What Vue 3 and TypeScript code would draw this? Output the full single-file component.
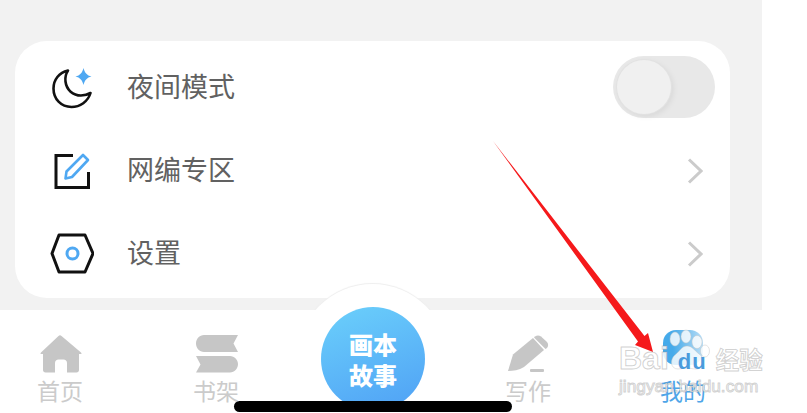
<script setup lang="ts">
interface MenuRow {
  id: string
  label: string
  chevron: boolean
}

interface TabItem {
  id: string
  label: string
  active?: boolean
}

const rows: MenuRow[] = [
  { id: 'night', label: '夜间模式', chevron: false },
  { id: 'editor', label: '网编专区', chevron: true },
  { id: 'settings', label: '设置', chevron: true },
]

const tabs: TabItem[] = [
  { id: 'home', label: '首页' },
  { id: 'shelf', label: '书架' },
  { id: 'story', label: '' },
  { id: 'write', label: '写作' },
  { id: 'mine', label: '我的', active: true },
]
</script>

<template>
  <div class="page">
    <div class="phone">
      <main class="content">
        <section class="card">
          <div v-for="row in rows" :key="row.id" class="row">
            <span class="row-icon">
              <svg v-if="row.id === 'night'" width="44" height="44" viewBox="0 0 44 44" fill="none">
                <path d="M18 4.500C9 6.500 3.500 14 3.500 22.500C3.500 33 11 41 21.500 41C30 41 38 35.500 40.500 27C37 29 34 29.500 31 29.500C23 29.500 16.500 24 15.500 15.500C15 11.500 16 7.500 18 4.500Z" stroke="#111" stroke-width="2.6" stroke-linejoin="round" />
                <path d="M33.500 2C34.500 6.500 37 9.500 41.500 10.500C37 11.500 34.500 14.500 33.500 19C32.500 14.500 30 11.500 25.500 10.500C30 9.500 32.500 6.500 33.500 2Z" fill="#4fa8f2" />
              </svg>
              <svg v-else-if="row.id === 'editor'" width="44" height="44" viewBox="0 0 44 44" fill="none">
                <path d="M23 6.500H6V38.500H38.500V23" stroke="#111" stroke-width="3" />
                <path d="M15.500 29.500L16.500 22.500L33 6L38 11L22 28Z" stroke="#4fa8f2" stroke-width="2.6" stroke-linejoin="round" />
              </svg>
              <svg v-else width="44" height="44" viewBox="0 0 44 44" fill="none">
                <path d="M9 3H35L43 21.500L35 40H9L2 21.500Z" stroke="#111" stroke-width="3" stroke-linejoin="round" />
                <circle cx="22.500" cy="21.500" r="5.500" stroke="#4fa8f2" stroke-width="3" />
              </svg>
            </span>
            <span class="row-label">{{ row.label }}</span>
            <span v-if="row.id === 'night'" class="switch"><span class="knob" /></span>
            <svg v-if="row.chevron" class="chevron" width="16" height="26" viewBox="0 0 16 26" fill="none">
              <path d="M2 1.500L14 13L2 24.500" stroke="#cbcbcb" stroke-width="3" />
            </svg>
          </div>
        </section>
      </main>

      <nav class="tabbar">
        <div class="bump" />
        <div v-for="tab in tabs" :key="tab.id" class="tab" :class="{ 'tab--active': tab.active }">
          <template v-if="tab.id === 'story'">
            <div class="story">
              <span>画本</span>
              <span>故事</span>
            </div>
          </template>
          <template v-else>
            <span class="tab-icon">
              <svg v-if="tab.id === 'home'" width="44" height="38" viewBox="0 0 44 38">
                <path d="M20.500 1C21.500 0 22.500 0 23.500 1L43 17.500C44 18.500 43.500 19 42.500 19H41V35C41 36.500 40 37.500 38.500 37.500H29V28C29 26 27.500 24.500 25.500 24.500H20.500C18.500 24.500 17 26 17 28V37.500H7.500C6 37.500 5 36.500 5 35V19H3.500C2.500 19 2 18.500 3 17.500Z" fill="#c6c6c6" />
              </svg>
              <svg v-else-if="tab.id === 'shelf'" width="44" height="38" viewBox="0 0 44 38">
                <path d="M10 0H44L39.500 8.500L44 17H10C5.500 17 2 13 2 8.500C2 4 5.500 0 10 0Z" fill="#c6c6c6" />
                <path d="M2 21H36C40.500 21 44 25 44 29C44 33.500 40.500 37.500 36 37.500H2L6.500 29.500Z" fill="#c6c6c6" />
              </svg>
              <svg v-else-if="tab.id === 'write'" width="44" height="38" viewBox="0 0 44 38">
                <path d="M2 36L7 19.500L27 3L38 15L18 32C13 35 7 36 2 36Z" fill="#c6c6c6" />
                <path d="M29 1.500C31 0 33 0 35 1.500L41 7C42.500 9 42.500 11 41 13L39.500 14L28 2.500Z" fill="#c6c6c6" />
                <rect x="24" y="34" width="14" height="3" rx="1" fill="#c6c6c6" />
              </svg>
              <svg v-else class="paw" width="52" height="50" viewBox="0 0 52 50">
                <defs>
                  <linearGradient id="pawFill" x1="0" y1="0" x2="1" y2="0">
                    <stop offset="0.25" stop-color="#45aaea" />
                    <stop offset="1" stop-color="#b9def6" />
                  </linearGradient>
                </defs>
                <rect x="4" y="4" width="40" height="35" rx="13" fill="url(#pawFill)" />
                <g fill="#fff" fill-opacity="0.82" stroke="#c4c4c4" stroke-opacity="0.45">
                  <ellipse cx="16" cy="13" rx="5" ry="7" />
                  <ellipse cx="27" cy="10.500" rx="5" ry="6.500" />
                  <ellipse cx="38" cy="16" rx="5" ry="6.500" />
                  <ellipse cx="46" cy="25" rx="4.500" ry="6" />
                  <path d="M28 20C33 20 35 24 40 28C46 32 46 43 37 43C33 43 31 42 28 42C25 42 22 43 19 43C11 43 11 33 16 29C21 25 23 20 28 20Z" />
                </g>
              </svg>
            </span>
            <span class="tab-label">{{ tab.label }}</span>
          </template>
        </div>
      </nav>
      <div class="home-bar" />
    </div>

    <svg class="arrow" width="807" height="413" viewBox="0 0 807 413">
      <path d="M493 141L644.500 336L648 333L653 352L635 345L638 341.500Z" fill="#f5191b" />
    </svg>

    <div class="mark">
      <span class="mark-top"><span class="mark-brand">Bai</span><span class="mark-du">du</span><span class="mark-cn">经验</span></span>
      <span class="mark-url">jingyan.baidu.com</span>
    </div>
  </div>
</template>

<style scoped>
.page {
  position: relative;
  width: 807px;
  height: 413px;
  overflow: hidden;
  background: #fff;
  font-family: "Noto Sans CJK SC", "Noto Sans", sans-serif;
}

.phone {
  position: relative;
  display: flex;
  flex-direction: column;
  width: 762px;
  height: 413px;
  background: #f2f2f2;
}

.content {
  flex: 1;
  padding: 41px 32px 0 15px;
}

.card {
  box-sizing: border-box;
  height: 257px;
  padding: 5px 12px 0 35px;
  border-radius: 32px;
  background: #fff;
}

.row {
  display: flex;
  align-items: center;
  height: 83px;
}

.row-icon {
  display: flex;
  width: 77px;
  flex-shrink: 0;
}

.row-label {
  flex: 1;
  padding-bottom: 4px;
  font-size: 27px;
  color: #616161;
}

.switch {
  display: flex;
  align-items: center;
  width: 102px;
  height: 62px;
  margin: 0 3px 2px 0;
  border-radius: 31px;
  background: #e8e8e8;
}

.knob {
  width: 54px;
  height: 54px;
  margin-left: 4px;
  border-radius: 50%;
  background: #f0f0f0;
  box-shadow: 0 0 0 1px #e2e2e2, 2px 2px 6px rgba(0, 0, 0, 0.08);
}

.chevron {
  margin: 0 15px 0 0;
}

.tabbar {
  position: relative;
  display: flex;
  gap: 36px;
  height: 103px;
  background: #fff;
}

.bump {
  position: absolute;
  left: 297px;
  top: -26px;
  width: 151px;
  height: 151px;
  border-radius: 50%;
  background: #fff;
  box-shadow: 0 -1px 1px #eeeeee;
  clip-path: inset(-3px -3px 125px -3px);
}

.tab {
  position: relative;
  display: flex;
  flex-direction: column;
  align-items: center;
  width: 120px;
  padding-top: 25px;
  color: #cbcbcb;
}

.tab--active {
  color: #4ea5e8;
}

.tab--active .tab-label {
  margin-left: -2px;
}

.tab-icon {
  display: flex;
  height: 38px;
}

.paw {
  margin: -9px 0 0 1px;
}

.tab-label {
  margin-top: 1px;
  font-size: 23px;
  line-height: 32px;
}

.story {
  display: flex;
  flex-direction: column;
  align-items: center;
  justify-content: center;
  width: 104px;
  height: 104px;
  margin: -28px 0 0 2px;
  border-radius: 50%;
  background: linear-gradient(160deg, #6bd0fb, #4fa0f5);
  color: #fff;
  font-size: 24px;
  font-weight: 900;
  line-height: 31px;
}

.home-bar {
  position: absolute;
  left: 234px;
  top: 401px;
  width: 278px;
  height: 11px;
  border-radius: 6px;
  background: #000;
}

.arrow {
  position: absolute;
  left: 0;
  top: 0;
}

.mark {
  position: absolute;
  left: 619px;
  top: 340px;
  display: flex;
  flex-direction: column;
  color: rgba(255, 255, 255, 0.85);
  -webkit-text-stroke: 1px rgba(140, 140, 140, 0.4);
  font-family: "Liberation Sans", "Noto Sans CJK SC", sans-serif;
}

.mark-top {
  display: flex;
  align-items: baseline;
  height: 34px;
}

.mark-brand {
  font-size: 32px;
  font-weight: 700;
}

.mark-du {
  margin-left: 9px;
  font-size: 22px;
  font-weight: 700;
  letter-spacing: 1px;
  color: #4a9bdc;
  -webkit-text-stroke: 0;
}

.mark-cn {
  margin-left: 9px;
  font-size: 23.5px;
  font-weight: 700;
}

.mark-url {
  margin-top: 2px;
  font-size: 17.3px;
}
</style>
